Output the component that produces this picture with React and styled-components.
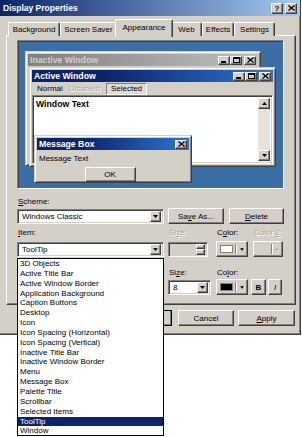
import React from 'react';
import styled, { createGlobalStyle, css } from 'styled-components';

const GlobalStyle = createGlobalStyle`
  html, body {
    margin: 0;
    padding: 0;
    background: #fff;
  }
  body {
    font-family: "Liberation Sans", Arial, sans-serif;
    font-size: 8px;
    color: #000;
  }
`;

const raised = css`
  border-style: solid;
  border-width: 1px;
  border-color: #fff #404040 #404040 #fff;
  box-shadow: inset -1px -1px #808080;
`;

const sunken = css`
  border-style: solid;
  border-width: 1px;
  border-color: #808080 #fff #fff #808080;
  box-shadow: inset 1px 1px #404040, inset -1px -1px #d4d0c8;
`;

const Screen = styled.div`
  position: relative;
  width: 302px;
  height: 437px;
  overflow: hidden;
`;

const Dialog = styled.div`
  box-sizing: border-box;
  width: 301px;
  height: 335px;
  background: #d4d0c8;
  border-right: 1px solid #404040;
  border-bottom: 1px solid #404040;
  box-shadow: inset -1px -1px #808080;
  display: flex;
  flex-direction: column;
`;

const TitleBar = styled.div`
  height: 16px;
  flex-shrink: 0;
  display: flex;
  align-items: center;
  padding: 0 3px 0 3px;
  background: linear-gradient(to right, #0a246a, #a6caf0);
  color: #fff;
  font-weight: bold;
  font-size: 8.5px;
`;

const TitleText = styled.span`
  flex: 1;
`;

const CapButton = styled.div`
  box-sizing: border-box;
  width: ${p => p.$w || 12}px;
  height: ${p => p.$h || 10}px;
  margin-left: ${p => p.$gap || 0}px;
  background: #d4d0c8;
  ${raised};
  display: flex;
  align-items: center;
  justify-content: center;
  color: #000;
  font-size: 8px;
  font-weight: bold;
`;

const Tabs = styled.div`
  height: 17px;
  margin-top: 3px;
  padding-left: 8px;
  display: flex;
  align-items: flex-end;
`;

const Tab = styled.div`
  box-sizing: border-box;
  width: ${p => p.$w}px;
  height: ${p => (p.$active ? 18 : 14)}px;
  margin: 0 ${p => (p.$active ? -2 : 0)}px ${p => (p.$active ? -1 : 0)}px;
  position: ${p => (p.$active ? 'relative' : 'static')};
  z-index: ${p => (p.$active ? 1 : 0)};
  background: #d4d0c8;
  border-top: 1px solid #fff;
  border-left: 1px solid #fff;
  border-right: 1px solid #404040;
  border-radius: 2px 2px 0 0;
  box-shadow: inset -1px 0 #808080;
  display: flex;
  align-items: ${p => (p.$active ? 'flex-start' : 'center')};
  padding-top: ${p => (p.$active ? 3 : 0)}px;
  justify-content: center;
  white-space: nowrap;
`;

const Panel = styled.div`
  box-sizing: border-box;
  width: 290px;
  height: 270px;
  margin: -1px 0 0 6px;
  padding: 4px 0 0 10px;
  background: #d4d0c8;
  ${raised};
`;

const Preview = styled.div`
  box-sizing: border-box;
  position: relative;
  width: 267px;
  height: 149px;
  background: #3a6ea5;
  border-style: solid;
  border-width: 1px;
  border-color: #808080 #fff #fff #808080;
  box-shadow: inset 1px 1px #404040;
`;

const Win = styled.div`
  position: absolute;
  left: ${p => p.$x}px;
  top: ${p => p.$y}px;
  width: ${p => p.$w}px;
  height: ${p => p.$h}px;
  box-sizing: border-box;
  background: #d4d0c8;
  border-style: solid;
  border-width: 1px;
  border-color: #d4d0c8 #404040 #404040 #d4d0c8;
  box-shadow: inset 1px 1px #fff, inset -1px -1px #808080;
  padding: 2px;
  display: flex;
  flex-direction: column;
`;

const WinTitle = styled.div`
  height: 12px;
  flex-shrink: 0;
  display: flex;
  align-items: center;
  padding: 0 2px;
  background: ${p => (p.$inactive
    ? 'linear-gradient(to right, #808080, #c0c0c0)'
    : 'linear-gradient(to right, #0a246a, #0a246a 30%, #2f74d0)')};
  color: ${p => (p.$inactive ? '#d4d0c8' : '#fff')};
  font-weight: bold;
  font-size: 8.7px;
`;

const MenuBar = styled.div`
  height: 13px;
  display: flex;
  align-items: center;
  padding-left: 2px;
`;

const MenuItem = styled.span`
  box-sizing: border-box;
  height: 12px;
  display: flex;
  align-items: center;
  padding: 0 ${p => (p.$selected ? 4 : 3)}px;
  margin-left: ${p => (p.$selected ? 3 : 0)}px;
  color: ${p => (p.$disabled ? '#a8a59e' : '#000')};
  text-shadow: ${p => (p.$disabled ? '1px 1px #fff' : 'none')};
  ${p => p.$selected && css`
    border-style: solid;
    border-width: 1px;
    border-color: #808080 #fff #fff #808080;
    background: #dedbd4;
  `}
`;

const Client = styled.div`
  flex: 1;
  box-sizing: border-box;
  display: flex;
  background: #fff;
  ${sunken};
  padding: 2px;
`;

const ClientText = styled.div`
  flex: 1;
  font-weight: bold;
  font-size: 8.7px;
  padding: 1px 0 0 1px;
`;

const ScrollBar = styled.div`
  width: 12px;
  display: flex;
  flex-direction: column;
  justify-content: space-between;
  background: #e6e3dc;
`;

const ScrollBtn = styled.div`
  box-sizing: border-box;
  width: 12px;
  height: 11px;
  background: #d4d0c8;
  ${raised};
  display: flex;
  align-items: center;
  justify-content: center;
`;

const MsgText = styled.div`
  padding: 4px 0 0 2px;
`;

const MsgFooter = styled.div`
  display: flex;
  justify-content: center;
  padding: 4px 6px 0 0;
`;

const Button = styled.div`
  box-sizing: border-box;
  width: ${p => p.$w}px;
  height: ${p => p.$h || 16}px;
  margin-left: ${p => p.$gap || 0}px;
  background: #d4d0c8;
  ${raised};
  ${p => p.$default && css`
    outline: 1px solid #000;
    outline-offset: -1px;
  `}
  display: flex;
  align-items: center;
  justify-content: center;
  font-weight: ${p => (p.$bold ? 'bold' : 'normal')};
  font-style: ${p => (p.$italic ? 'italic' : 'normal')};
  flex-shrink: 0;
`;

const Label = styled.div`
  height: 10px;
  line-height: 10px;
  padding-left: 1px;
  white-space: nowrap;
  color: ${p => (p.$disabled ? '#a8a59e' : '#000')};
  text-shadow: ${p => (p.$disabled ? '1px 1px #fff' : 'none')};
`;

const FieldRow = styled.div`
  display: flex;
  align-items: flex-end;
  margin-top: ${p => p.$top || 0}px;
`;

const Field = styled.div`
  width: ${p => p.$w}px;
  margin-left: ${p => p.$gap || 0}px;
  display: flex;
  flex-direction: column;
  gap: ${p => p.$labelGap ?? 3}px;
  flex-shrink: 0;
`;

const ControlSlot = styled.div`
  height: 16px;
  display: flex;
  align-items: center;
`;

const Combo = styled.div`
  box-sizing: border-box;
  width: 100%;
  height: 15px;
  display: flex;
  align-items: center;
  background: ${p => (p.$disabled ? '#d4d0c8' : '#fff')};
  ${sunken};
  padding: 2px;
`;

const ComboText = styled.span`
  flex: 1;
  padding-left: 2px;
  white-space: nowrap;
  overflow: hidden;
`;

const DropBtn = styled.div`
  box-sizing: border-box;
  width: 11px;
  height: 11px;
  background: #d4d0c8;
  ${raised};
  display: flex;
  align-items: center;
  justify-content: center;
`;

const Spin = styled.div`
  width: 9px;
  height: 11px;
  display: flex;
  flex-direction: column;
`;

const SpinHalf = styled.div`
  box-sizing: border-box;
  flex: 1;
  background: #d4d0c8;
  ${raised};
`;

const ColorBtn = styled(Button)`
  justify-content: flex-start;
  padding: 0 3px;
  gap: 2px;
`;

const Swatch = styled.div`
  width: 16px;
  height: 8px;
  box-sizing: border-box;
  border: 1px solid #808080;
  background: ${p => p.$color};
`;

const EmptySwatch = styled.div`
  width: 16px;
  height: 8px;
`;

const Divider = styled.div`
  width: 1px;
  height: 10px;
  background: #808080;
  box-shadow: 1px 0 #fff;
  margin-right: 2px;
`;

const Footer = styled.div`
  display: flex;
  justify-content: flex-end;
  margin-top: 5px;
  padding-right: 5px;
`;

const DropList = styled.div`
  position: absolute;
  left: 17px;
  top: 258px;
  width: 147px;
  height: 178px;
  box-sizing: border-box;
  background: #fff;
  border: 1px solid #000;
  z-index: 5;
`;

const ListItem = styled.div`
  height: 9.85px;
  line-height: 9.85px;
  padding-left: 2px;
  white-space: nowrap;
  background: ${p => (p.$selected ? '#0a246a' : 'transparent')};
  color: ${p => (p.$selected ? '#fff' : '#000')};
`;

const Arrow = ({ dir = 'down', color = '#000' }) => (
  <svg width="5" height="3" viewBox="0 0 5 3">
    <path d={dir === 'down' ? 'M0 0h5L2.5 3z' : 'M0 3h5L2.5 0z'} fill={color} />
  </svg>
);

const MinGlyph = () => (
  <svg width="6" height="6" viewBox="0 0 6 6"><rect x="0" y="4" width="5" height="2" fill="#000" /></svg>
);

const MaxGlyph = () => (
  <svg width="7" height="6" viewBox="0 0 7 6">
    <rect x="0.5" y="0.5" width="6" height="5" fill="none" stroke="#000" />
    <rect x="0" y="0" width="7" height="2" fill="#000" />
  </svg>
);

const CloseGlyph = () => (
  <svg width="7" height="6" viewBox="0 0 7 6">
    <path d="M0.5 0.5l6 5M6.5 0.5l-6 5" stroke="#000" strokeWidth="1.3" />
  </svg>
);

const Caption = ({ close }) => (
  <>
    {!close && <CapButton $w={12} $h={9}><MinGlyph /></CapButton>}
    {!close && <CapButton $w={12} $h={9}><MaxGlyph /></CapButton>}
    <CapButton $w={12} $h={9} $gap={close ? 0 : 2}><CloseGlyph /></CapButton>
  </>
);

const tabs = [
  { label: 'Background', w: 52 },
  { label: 'Screen Saver', w: 57 },
  { label: 'Appearance', w: 58, active: true },
  { label: 'Web', w: 31 },
  { label: 'Effects', w: 32 },
  { label: 'Settings', w: 41 },
];

const items = [
  '3D Objects', 'Active Title Bar', 'Active Window Border', 'Application Background',
  'Caption Buttons', 'Desktop', 'Icon', 'Icon Spacing (Horizontal)', 'Icon Spacing (Vertical)',
  'Inactive Title Bar', 'Inactive Window Border', 'Menu', 'Message Box', 'Palette Title',
  'Scrollbar', 'Selected Items', 'ToolTip', 'Window',
];

const App = () => (
  <Screen>
    <GlobalStyle />
    <Dialog>
      <TitleBar>
        <TitleText>Display Properties</TitleText>
        <CapButton $w={12} $h={11}>?</CapButton>
        <CapButton $w={12} $h={11} $gap={2}><CloseGlyph /></CapButton>
      </TitleBar>

      <Tabs>
        {tabs.map(t => (
          <Tab key={t.label} $w={t.w} $active={t.active}>{t.label}</Tab>
        ))}
      </Tabs>

      <Panel>
        <Preview>
          <Win $x={7} $y={10} $w={236} $h={115}>
            <WinTitle $inactive>
              <TitleText>Inactive Window</TitleText>
              <Caption />
            </WinTitle>
          </Win>

          <Win $x={11} $y={26} $w={247} $h={100}>
            <WinTitle>
              <TitleText>Active Window</TitleText>
              <Caption />
            </WinTitle>
            <MenuBar>
              <MenuItem>Normal</MenuItem>
              <MenuItem $disabled>Disabled</MenuItem>
              <MenuItem $selected>Selected</MenuItem>
            </MenuBar>
            <Client>
              <ClientText>Window Text</ClientText>
              <ScrollBar>
                <ScrollBtn><Arrow dir="up" /></ScrollBtn>
                <ScrollBtn><Arrow /></ScrollBtn>
              </ScrollBar>
            </Client>
          </Win>

          <Win $x={16} $y={94} $w={158} $h={48}>
            <WinTitle>
              <TitleText>Message Box</TitleText>
              <Caption close />
            </WinTitle>
            <MsgText>Message Text</MsgText>
            <MsgFooter>
              <Button $w={51} $h={15}>OK</Button>
            </MsgFooter>
          </Win>
        </Preview>

        <FieldRow $top={8}>
          <Field $w={147} $labelGap={1}>
            <Label><u>S</u>cheme:</Label>
            <ControlSlot>
              <Combo>
                <ComboText>Windows Classic</ComboText>
                <DropBtn><Arrow /></DropBtn>
              </Combo>
            </ControlSlot>
          </Field>
          <Button $w={56} $gap={4}>Sa<u>v</u>e As...</Button>
          <Button $w={55} $gap={5}><u>D</u>elete</Button>
        </FieldRow>

        <FieldRow $top={4}>
          <Field $w={147}>
            <Label><u>I</u>tem:</Label>
            <ControlSlot>
              <Combo>
                <ComboText>ToolTip</ComboText>
                <DropBtn><Arrow /></DropBtn>
              </Combo>
            </ControlSlot>
          </Field>
          <Field $w={40} $gap={4}>
            <Label $disabled>Si<u>z</u>e:</Label>
            <ControlSlot>
              <Combo $disabled>
                <ComboText />
                <Spin>
                  <SpinHalf />
                  <SpinHalf />
                </Spin>
              </Combo>
            </ControlSlot>
          </Field>
          <Field $w={32} $gap={8}>
            <Label>C<u>o</u>lor:</Label>
            <ColorBtn $w={32}>
              <Swatch $color="#ffffe1" />
              <Divider />
              <Arrow />
            </ColorBtn>
          </Field>
          <Field $w={30} $gap={5}>
            <Label $disabled>Color <u>2</u>:</Label>
            <ColorBtn $w={30}>
              <EmptySwatch />
              <Divider />
              <Arrow color="#a8a59e" />
            </ColorBtn>
          </Field>
        </FieldRow>

        <FieldRow $top={11}>
          {/* font field sits under the open list, only its frame matters */}
          <Field $w={147} $labelGap={1}>
            <Label />
            <ControlSlot>
              <Combo>
                <ComboText />
                <DropBtn><Arrow /></DropBtn>
              </Combo>
            </ControlSlot>
          </Field>
          <Field $w={43} $gap={4} $labelGap={1}>
            <Label>Si<u>z</u>e:</Label>
            <ControlSlot>
              <Combo>
                <ComboText>8</ComboText>
                <DropBtn><Arrow /></DropBtn>
              </Combo>
            </ControlSlot>
          </Field>
          <Field $w={32} $gap={5} $labelGap={1}>
            <Label>Co<u>l</u>or:</Label>
            <ColorBtn $w={32}>
              <Swatch $color="#000" />
              <Divider />
              <Arrow />
            </ColorBtn>
          </Field>
          <Button $w={15} $gap={3} $bold>B</Button>
          <Button $w={14} $gap={2} $italic>I</Button>
        </FieldRow>
      </Panel>

      <Footer>
        <Button $w={56} $default>OK</Button>
        <Button $w={56} $gap={6}>Cancel</Button>
        <Button $w={57} $gap={4}><u>A</u>pply</Button>
      </Footer>
    </Dialog>

    <DropList>
      {items.map(i => (
        <ListItem key={i} $selected={i === 'ToolTip'}>{i}</ListItem>
      ))}
    </DropList>
  </Screen>
);

export default App;
